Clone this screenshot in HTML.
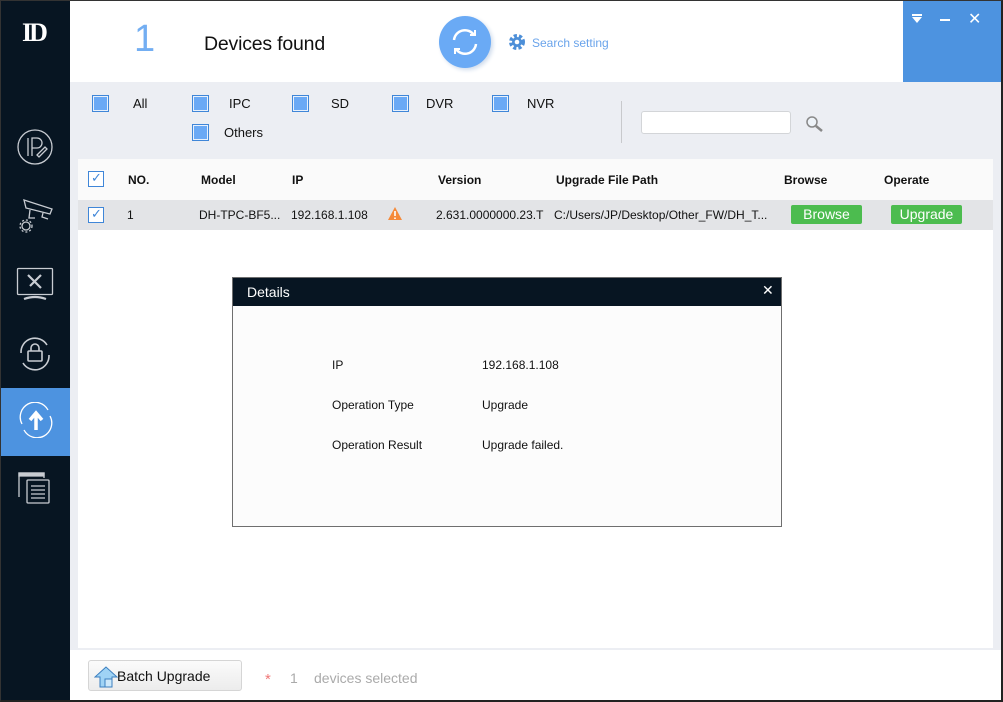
<!DOCTYPE html>
<html><head><meta charset="utf-8"><style>
*{margin:0;padding:0;box-sizing:border-box}
body{width:1003px;height:702px;overflow:hidden;background:#fff;font-family:"Liberation Sans",Arial,sans-serif;font-size:13px;color:#111;position:relative}
.abs{position:absolute}
.cb{position:absolute;width:17px;height:17px;border:1px solid #3f86d8;background:#6aa9f5;box-shadow:inset 0 0 0 1px #e8f1fc}
.cbk{position:absolute;width:16px;height:16px;border:1px solid #3f86d8;background:#fff}
.th{position:absolute;top:173px;font-weight:bold;font-size:12px}
.td{position:absolute;top:208px;font-size:12px}
.btn{position:absolute;top:205px;height:19px;background:#4cbc4f;color:#fff;font-size:14px;text-align:center;line-height:19px;border-radius:2px}
</style></head><body>
<div class="abs" style="left:0;top:0;width:1003px;height:702px;border:1px solid #333;border-right:2px solid #222;border-bottom:2px solid #222"></div>
<div class="abs" style="left:1px;top:1px;width:69px;height:699px;background:#071522"></div>
<div class="abs" style="left:22px;top:18px;color:#fff;font:bold 26px 'Liberation Serif',serif;letter-spacing:-3px">ID</div>
<svg class="abs" style="left:15px;top:127px" width="40" height="40" viewBox="0 0 40 40" fill="none" stroke="#c8ccd2" stroke-width="1.3"><circle cx="20" cy="20" r="17"/><path d="M13 11v18M17 29V11h5a5 5 0 0 1 0 10h-5"/><path d="M22 28l8-8 2 2-8 8z"/></svg>
<svg class="abs" style="left:17px;top:197px" width="40" height="36" viewBox="0 0 40 36" fill="none" stroke="#c8ccd2" stroke-width="1.3"><path d="M7 3l28 9-2 5-24-6z M13 13l-1 8h6M26 16l-1 4 6 2"/><circle cx="9" cy="29" r="4"/><circle cx="9" cy="29" r="6" stroke-dasharray="2 2"/></svg>
<svg class="abs" style="left:16px;top:267px" width="38" height="34" viewBox="0 0 38 34" fill="none" stroke="#c8ccd2" stroke-width="1.3"><rect x="1.5" y="1.5" width="35" height="26" rx="1"/><path d="M8 32q11-4 22 0M12 8l13 13M25 8l-11 11" stroke-width="2.2"/></svg>
<svg class="abs" style="left:16px;top:335px" width="38" height="38" viewBox="0 0 38 38" fill="none" stroke="#c8ccd2" stroke-width="1.6"><path d="M5 18A14 14 0 0 1 31 10M33 20A14 14 0 0 1 7 28"/><rect x="12" y="16" width="14" height="10" rx="1"/><path d="M15 16v-3a4 4 0 0 1 8 0v3"/></svg>
<div class="abs" style="left:1px;top:388px;width:69px;height:68px;background:#4d93e0"></div>
<svg class="abs" style="left:18px;top:402px" width="36" height="36" viewBox="0 0 36 36" fill="none" stroke="#fff" stroke-width="1.3"><path d="M4 22A14 14 0 0 1 30 8M32 14A14 14 0 0 1 6 28"/><path d="M18 28V13M12 18l6-7 6 7" stroke-width="3.5"/></svg>
<svg class="abs" style="left:18px;top:471px" width="34" height="34" viewBox="0 0 34 34" fill="none" stroke="#c8ccd2" stroke-width="1.3"><path d="M1 26V2h25v5" /><path d="M1 2h25v3H1z" fill="#c8ccd2"/><rect x="9" y="9" width="22" height="23" rx="1"/><path d="M13 15h14M13 19h14M13 23h14M13 27h14"/></svg>
<div class="abs" style="left:134px;top:18px;font-size:38px;color:#73aef2">1</div>
<div class="abs" style="left:204px;top:33px;font-size:19.5px;letter-spacing:-0.2px">Devices found</div>
<div class="abs" style="left:439px;top:16px;width:52px;height:52px;border-radius:50%;background:#6aaaf5;box-shadow:2px 2px 4px #d0dcec"></div>
<svg class="abs" style="left:448px;top:25px" width="34" height="34" viewBox="0 0 34 34" fill="none" stroke="#fff" stroke-width="2.5"><path d="M6 15a11 11 0 0 1 20-5M28 19a11 11 0 0 1-20 5"/><path d="M22 10h5V5M12 24H7v5" stroke-width="2"/></svg>
<svg class="abs" style="left:508px;top:33px" width="18" height="18" viewBox="0 0 18 18"><circle cx="9" cy="9" r="6" fill="none" stroke="#4d8fd8" stroke-width="4" stroke-dasharray="3 2"/><circle cx="9" cy="9" r="5" fill="#4d8fd8"/><circle cx="9" cy="9" r="2.3" fill="#fff"/></svg>
<div class="abs" style="left:532px;top:36px;font-size:12px;color:#6aa4eb">Search setting</div>
<div class="abs" style="left:903px;top:1px;width:98px;height:81px;background:#4d93e0"></div>
<div class="abs" style="left:912px;top:14px;width:10px;height:2px;background:#fff"></div>
<div class="abs" style="left:912px;top:17px;width:0;height:0;border-left:5px solid transparent;border-right:5px solid transparent;border-top:6px solid #fff"></div>
<div class="abs" style="left:940px;top:19px;width:10px;height:2px;background:#fff"></div>
<div class="abs" style="left:968px;top:9px;color:#fff;font-size:16px">✕</div>
<div class="abs" style="left:70px;top:82px;width:931px;height:618px;background:#eceef3"></div>
<div class="cb" style="left:92px;top:95px"></div><div class="abs" style="left:133px;top:96px">All</div>
<div class="cb" style="left:192px;top:95px"></div><div class="abs" style="left:229px;top:96px">IPC</div>
<div class="cb" style="left:292px;top:95px"></div><div class="abs" style="left:331px;top:96px">SD</div>
<div class="cb" style="left:392px;top:95px"></div><div class="abs" style="left:426px;top:96px">DVR</div>
<div class="cb" style="left:492px;top:95px"></div><div class="abs" style="left:527px;top:96px">NVR</div>
<div class="cb" style="left:192px;top:124px"></div><div class="abs" style="left:224px;top:125px">Others</div>
<div class="abs" style="left:621px;top:101px;width:1px;height:42px;background:#c8c9cc"></div>
<div class="abs" style="left:641px;top:111px;width:150px;height:23px;background:#fff;border:1px solid #d3d5d8;border-radius:3px"></div>
<svg class="abs" style="left:805px;top:115px" width="20" height="18" viewBox="0 0 20 18" fill="none" stroke="#888" stroke-width="1.5"><circle cx="7" cy="7" r="5" fill="#eef3f8"/><path d="M11 11l6 5" stroke-width="2.5"/></svg>
<div class="abs" style="left:78px;top:159px;width:915px;height:489px;background:#fff"></div>
<div class="abs" style="left:78px;top:159px;width:915px;height:41px;background:#fafafa"></div>
<div class="abs" style="left:78px;top:200px;width:915px;height:30px;background:#e3e4e7"></div>
<div class="cbk" style="left:88px;top:171px"></div><div class="abs" style="left:91px;top:170px;color:#3f86d8;font-size:13px">✓</div>
<div class="th" style="left:128px">NO.</div><div class="th" style="left:201px">Model</div><div class="th" style="left:292px">IP</div><div class="th" style="left:438px">Version</div><div class="th" style="left:556px">Upgrade File Path</div><div class="th" style="left:784px">Browse</div><div class="th" style="left:884px">Operate</div>
<div class="cbk" style="left:88px;top:207px"></div><div class="abs" style="left:91px;top:206px;color:#3f86d8;font-size:13px">✓</div>
<div class="td" style="left:127px">1</div><div class="td" style="left:199px">DH-TPC-BF5...</div><div class="td" style="left:291px">192.168.1.108</div>
<svg class="abs" style="left:387px;top:206px" width="16" height="15" viewBox="0 0 16 15"><path d="M8 1L15 14H1z" fill="#f58a3a"/><path d="M8 5v5M8 11.5v1.5" stroke="#fff" stroke-width="1.6"/></svg>
<div class="td" style="left:436px">2.631.0000000.23.T</div><div class="td" style="left:554px">C:/Users/JP/Desktop/Other_FW/DH_T...</div>
<div class="btn" style="left:791px;width:71px">Browse</div><div class="btn" style="left:891px;width:71px">Upgrade</div>
<div class="abs" style="left:232px;top:277px;width:550px;height:250px;background:#fcfcfc;border:1px solid #6f6f6f"></div>
<div class="abs" style="left:233px;top:278px;width:548px;height:28px;background:#071522"></div>
<div class="abs" style="left:247px;top:284px;color:#fff;font-size:14px">Details</div>
<div class="abs" style="left:762px;top:282px;color:#fff;font-size:14px">✕</div>
<div class="abs" style="left:332px;top:358px;font-size:12px">IP</div><div class="abs" style="left:482px;top:358px;font-size:12px">192.168.1.108</div>
<div class="abs" style="left:332px;top:398px;font-size:12px">Operation Type</div><div class="abs" style="left:482px;top:398px;font-size:12px">Upgrade</div>
<div class="abs" style="left:332px;top:438px;font-size:12px">Operation Result</div><div class="abs" style="left:482px;top:438px;font-size:12px">Upgrade failed.</div>
<div class="abs" style="left:70px;top:650px;width:931px;height:50px;background:#fff"></div>
<div class="abs" style="left:88px;top:660px;width:154px;height:31px;border:1px solid #d5d5d5;border-radius:3px;background:linear-gradient(#fbfbfb,#ececec)"></div>
<svg class="abs" style="left:94px;top:666px" width="24" height="22" viewBox="0 0 24 22"><path d="M12 1L1 11h5v10h12V11h5z" fill="#9fd3f5" stroke="#3b7fc0"/><rect x="11" y="13" width="7" height="8" fill="#cde8fa" stroke="#3b7fc0"/></svg>
<div class="abs" style="left:117px;top:668px;font-size:14px">Batch Upgrade</div>
<div class="abs" style="left:265px;top:671px;color:#f07878;font-size:15px">*</div>
<div class="abs" style="left:290px;top:670px;color:#aaa;font-size:14px">1</div>
<div class="abs" style="left:314px;top:670px;color:#aaa;font-size:14px">devices selected</div>
</body></html>
